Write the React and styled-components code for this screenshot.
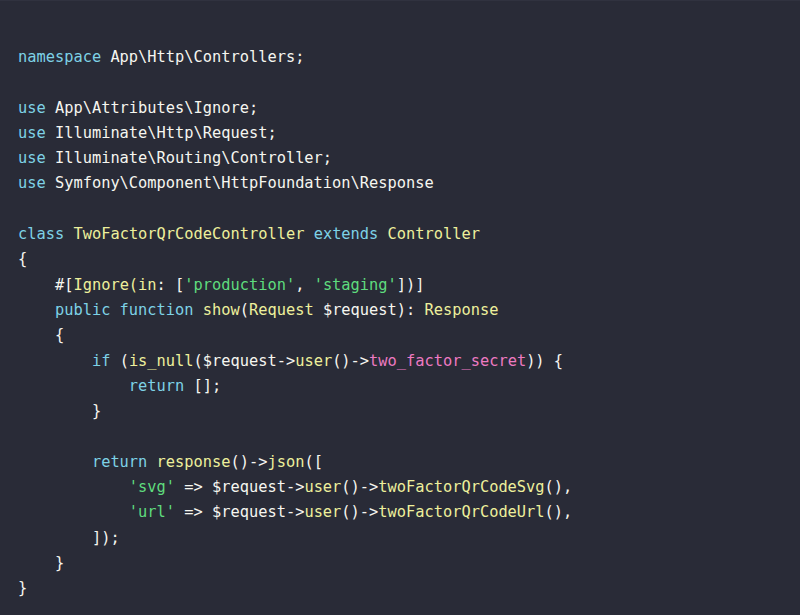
import React from 'react';
import styled, { createGlobalStyle } from 'styled-components';

const GlobalStyle = createGlobalStyle`
  html, body {
    margin: 0;
    padding: 0;
    background: #292b37;
  }
`;

const colors = {
  plain: '#f6f6f0',
  kw: '#7ed2e6',
  fn: '#eef09c',
  str: '#5fdc7e',
  prop: '#ee7ac2',
};

const Panel = styled.div`
  width: 800px;
  height: 615px;
  box-sizing: border-box;
  background: #292b37;
  border-top: 1px solid #30323f;
  padding: 44px 18px 0;
  overflow: hidden;
`;

const Code = styled.pre`
  margin: 0;
  font-family: "DejaVu Sans Mono", "Liberation Mono", monospace;
  font-size: 15.35px;
  line-height: 25.3px;
  color: ${colors.plain};
`;

const Line = styled.div`
  height: 25.3px;
  white-space: pre;
`;

const Tok = styled.span`
  color: ${({ kind }) => colors[kind] || colors.plain};
`;

const lines = [
  [['kw', 'namespace'], ['plain', ' App\\Http\\Controllers;']],
  [],
  [['kw', 'use'], ['plain', ' App\\Attributes\\Ignore;']],
  [['kw', 'use'], ['plain', ' Illuminate\\Http\\Request;']],
  [['kw', 'use'], ['plain', ' Illuminate\\Routing\\Controller;']],
  [['kw', 'use'], ['plain', ' Symfony\\Component\\HttpFoundation\\Response']],
  [],
  [['kw', 'class'], ['plain', ' '], ['fn', 'TwoFactorQrCodeController'], ['plain', ' '], ['kw', 'extends'], ['plain', ' '], ['fn', 'Controller']],
  [['plain', '{']],
  [['plain', '    #['], ['fn', 'Ignore(in'], ['plain', ': ['], ['str', "'production'"], ['plain', ', '], ['str', "'staging'"], ['plain', '])]']],
  [['kw', '    public function'], ['plain', ' '], ['fn', 'show'], ['plain', '('], ['fn', 'Request'], ['plain', ' $request): '], ['fn', 'Response']],
  [['plain', '    {']],
  [['kw', '        if'], ['plain', ' ('], ['fn', 'is_null'], ['plain', '($request->'], ['fn', 'user'], ['plain', '()->'], ['prop', 'two_factor_secret'], ['plain', ')) {']],
  [['kw', '            return'], ['plain', ' [];']],
  [['plain', '        }']],
  [],
  [['kw', '        return'], ['plain', ' '], ['fn', 'response'], ['plain', '()->'], ['fn', 'json'], ['plain', '([']],
  [['plain', '            '], ['str', "'svg'"], ['plain', ' => $request->'], ['fn', 'user'], ['plain', '()->'], ['fn', 'twoFactorQrCodeSvg'], ['plain', '(),']],
  [['plain', '            '], ['str', "'url'"], ['plain', ' => $request->'], ['fn', 'user'], ['plain', '()->'], ['fn', 'twoFactorQrCodeUrl'], ['plain', '(),']],
  [['plain', '        ]);']],
  [['plain', '    }']],
  [['plain', '}']],
];

const App = () => {
  return (
    <>
      <GlobalStyle />
      <Panel>
        <Code>
          {lines.map((tokens, i) => (
            <Line key={i}>
              {tokens.length === 0 ? ' ' : tokens.map(([kind, text], j) => (
                <Tok key={j} kind={kind}>{text}</Tok>
              ))}
            </Line>
          ))}
        </Code>
      </Panel>
    </>
  );
};

export default App;
